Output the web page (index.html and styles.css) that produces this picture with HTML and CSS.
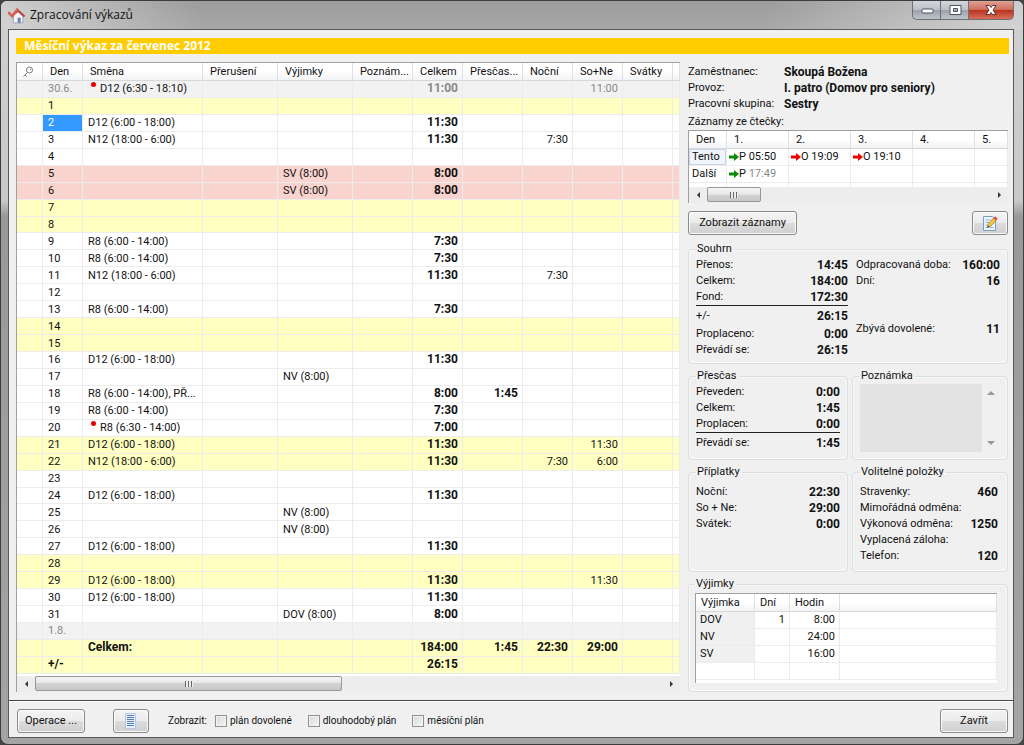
FILE: index.html
```html
<!DOCTYPE html>
<html lang="cs">
<head>
<meta charset="utf-8">
<title>Zpracování výkazů</title>
<link rel="stylesheet" href="styles.css">
</head>
<body>
<div class="window">
  <header class="titlebar">
    <svg class="app-icon" viewBox="0 0 16 16" aria-hidden="true">
      <path d="M5 8v7h9V8l-4.500-4z" fill="#f4f6fa" stroke="#8f9bb0" stroke-width=".8"/>
      <path d="M9 10h3v5H9z" fill="#6f83b8"/>
      <path d="M3 9l6.500-5.500 6 5.500" fill="none" stroke="#b8433c" stroke-width="2"/>
      <path d="M0 5l4 3.500L9.500 1.500" fill="none" stroke="#d8605a" stroke-width="2.500"/>
    </svg>
    <h1 class="title">Zpracování výkazů</h1>
    <div class="controls">
      <button class="control" aria-label="Minimalizovat"><svg viewBox="0 0 16 14"><rect x="3" y="6" width="11" height="4" rx="1" fill="#fff" stroke="#4d5360"/></svg></button>
      <button class="control" aria-label="Maximalizovat"><svg viewBox="0 0 16 14"><path d="M3 2.500h11v9H3zM6.500 5.500h4v3h-4z" fill="#fff" fill-rule="evenodd" stroke="#4d5360"/></svg></button>
      <button class="control control-close" aria-label="Zavřít okno"><svg viewBox="0 0 16 14"><path d="M3 2.500h3.500L8 4.500l1.500-2H13L10 7l3 4.500H9.500L8 9.500l-1.500 2H3L6 7z" fill="#fff" stroke="#5c3030"/></svg></button>
    </div>
  </header>
  <div class="client">
    <h2 class="banner">Měsíční výkaz za červenec 2012</h2>
    <main class="content">
      <section class="sheet">
        <div class="sheet-body">
        <table class="grid month">
          <colgroup><col class="c-key"><col class="c-day"><col class="c-shift"><col class="c-text"><col class="c-text"><col class="c-num60"><col class="c-num50"><col class="c-num60"><col class="c-num50"><col class="c-num50"><col class="c-num50"><col></colgroup>
          <thead><tr><th><svg class="key" viewBox="0 0 12 12" role="img" aria-label="Klíč"><circle cx="7.500" cy="4" r="3" fill="none" stroke="#777"/><path d="M5.500 6.500L1.500 10.500M3 9l1.500 1.500M8 3.500h1" stroke="#777" fill="none"/></svg></th><th>Den</th><th>Směna</th><th>Přerušení</th><th>Výjimky</th><th>Poznám...</th><th>Celkem</th><th>Přesčas...</th><th>Noční</th><th>So+Ne</th><th>Svátky</th><th></th></tr></thead>
          <tbody>
            <tr class="outside"><td><td>30.6.<td><span class="changed">D12 (6:30 - 18:10)</span><td><td><td><td>11:00<td><td><td>11:00<td><td>
            <tr class="weekend"><td><td>1<td><td><td><td><td><td><td><td><td><td>
            <tr><td><td class="selected">2<td>D12 (6:00 - 18:00)<td><td><td><td>11:30<td><td><td><td><td>
            <tr><td><td>3<td>N12 (18:00 - 6:00)<td><td><td><td>11:30<td><td>7:30<td><td><td>
            <tr><td><td>4<td><td><td><td><td><td><td><td><td><td>
            <tr class="holiday"><td><td>5<td><td><td>SV (8:00)<td><td>8:00<td><td><td><td><td>
            <tr class="holiday"><td><td>6<td><td><td>SV (8:00)<td><td>8:00<td><td><td><td><td>
            <tr class="weekend"><td><td>7<td><td><td><td><td><td><td><td><td><td>
            <tr class="weekend"><td><td>8<td><td><td><td><td><td><td><td><td><td>
            <tr><td><td>9<td>R8 (6:00 - 14:00)<td><td><td><td>7:30<td><td><td><td><td>
            <tr><td><td>10<td>R8 (6:00 - 14:00)<td><td><td><td>7:30<td><td><td><td><td>
            <tr><td><td>11<td>N12 (18:00 - 6:00)<td><td><td><td>11:30<td><td>7:30<td><td><td>
            <tr><td><td>12<td><td><td><td><td><td><td><td><td><td>
            <tr><td><td>13<td>R8 (6:00 - 14:00)<td><td><td><td>7:30<td><td><td><td><td>
            <tr class="weekend"><td><td>14<td><td><td><td><td><td><td><td><td><td>
            <tr class="weekend"><td><td>15<td><td><td><td><td><td><td><td><td><td>
            <tr><td><td>16<td>D12 (6:00 - 18:00)<td><td><td><td>11:30<td><td><td><td><td>
            <tr><td><td>17<td><td><td>NV (8:00)<td><td><td><td><td><td><td>
            <tr><td><td>18<td>R8 (6:00 - 14:00), PŘ...<td><td><td><td>8:00<td>1:45<td><td><td><td>
            <tr><td><td>19<td>R8 (6:00 - 14:00)<td><td><td><td>7:30<td><td><td><td><td>
            <tr><td><td>20<td><span class="changed">R8 (6:30 - 14:00)</span><td><td><td><td>7:00<td><td><td><td><td>
            <tr class="weekend"><td><td>21<td>D12 (6:00 - 18:00)<td><td><td><td>11:30<td><td><td>11:30<td><td>
            <tr class="weekend"><td><td>22<td>N12 (18:00 - 6:00)<td><td><td><td>11:30<td><td>7:30<td>6:00<td><td>
            <tr><td><td>23<td><td><td><td><td><td><td><td><td><td>
            <tr><td><td>24<td>D12 (6:00 - 18:00)<td><td><td><td>11:30<td><td><td><td><td>
            <tr><td><td>25<td><td><td>NV (8:00)<td><td><td><td><td><td><td>
            <tr><td><td>26<td><td><td>NV (8:00)<td><td><td><td><td><td><td>
            <tr><td><td>27<td>D12 (6:00 - 18:00)<td><td><td><td>11:30<td><td><td><td><td>
            <tr class="weekend"><td><td>28<td><td><td><td><td><td><td><td><td><td>
            <tr class="weekend"><td><td>29<td>D12 (6:00 - 18:00)<td><td><td><td>11:30<td><td><td>11:30<td><td>
            <tr><td><td>30<td>D12 (6:00 - 18:00)<td><td><td><td>11:30<td><td><td><td><td>
            <tr><td><td>31<td><td><td>DOV (8:00)<td><td>8:00<td><td><td><td><td>
            <tr class="outside"><td><td>1.8.<td><td><td><td><td><td><td><td><td><td>
            <tr class="weekend total"><td><td><td>Celkem:<td><td><td><td>184:00<td>1:45<td>22:30<td>29:00<td><td>
            <tr class="weekend total"><td><td>+/-<td><td><td><td><td>26:15<td><td><td><td><td>
          </tbody>
        </table>
        </div>
        <div class="scroll">
          <button class="arrow left" aria-label="Posunout vlevo"></button>
          <div class="track"><div class="thumb thumb-month"><i></i></div></div>
          <button class="arrow right" aria-label="Posunout vpravo"></button>
        </div>
      </section>

      <aside class="side">
        <dl class="person">
          <dt>Zaměstnanec:</dt><dd>Skoupá Božena</dd>
          <dt>Provoz:</dt><dd>I. patro (Domov pro seniory)</dd>
          <dt>Pracovní skupina:</dt><dd>Sestry</dd>
        </dl>
        <h3 class="caption">Záznamy ze čtečky:</h3>
        <div class="reader">
          <table class="grid">
            <colgroup><col class="r-day"><col class="r-rec"><col class="r-rec"><col class="r-rec"><col class="r-rec"><col></colgroup>
            <thead><tr><th>Den</th><th>1.</th><th>2.</th><th>3.</th><th>4.</th><th>5.</th></tr></thead>
            <tbody>
              <tr><td class="current">Tento<td><span class="rec in">P 05:50</span><td><span class="rec out">O 19:09</span><td><span class="rec out">O 19:10</span><td><td>
              <tr><td>Další<td><span class="rec in">P <span class="dim">17:49</span></span><td><td><td><td>
              <tr class="stub"><td><td><td><td><td><td>
            </tbody>
          </table>
          <div class="scroll">
            <button class="arrow left" aria-label="Posunout vlevo"></button>
            <div class="track"><div class="thumb thumb-reader"><i></i></div></div>
            <button class="arrow right" aria-label="Posunout vpravo"></button>
          </div>
        </div>
        <div class="actions">
          <button class="btn btn-records">Zobrazit záznamy</button>
          <button class="btn btn-icon" aria-label="Upravit">
            <svg viewBox="0 0 16 16"><path d="M1.500 1.500h9l3 3v11h-12z" fill="#eaf4fe" stroke="#7c9cc4"/><path d="M3.500 5h5M3.500 7.500h4M3.500 10h3M3.500 12.500h8" stroke="#8fb4de"/><path d="M6.500 8.500L11.500 3l2.500 2.500L9 11l-3.500 1.200z" fill="#f8c43c" stroke="#a9782a" stroke-width=".7"/><path d="M11.500 3L13 1.200l2.700 2.500L14 5.500z" fill="#dc4b40"/><path d="M5.300 12.400l.7-2 1.400 1.400z" fill="#333"/></svg>
          </button>
        </div>

        <fieldset class="group summary">
          <legend>Souhrn</legend>
          <dl class="pairs">
            <dt>Přenos:</dt><dd>14:45</dd>
            <dt>Celkem:</dt><dd>184:00</dd>
            <dt class="ruled">Fond:</dt><dd class="ruled">172:30</dd>
            <dt class="spaced">+/-</dt><dd class="spaced">26:15</dd>
            <dt>Proplaceno:</dt><dd>0:00</dd>
            <dt>Převádí se:</dt><dd>26:15</dd>
          </dl>
          <div class="summary-right">
            <dl class="pairs"><dt>Odpracovaná doba:</dt><dd>160:00</dd><dt>Dní:</dt><dd>16</dd></dl>
            <dl class="pairs"><dt>Zbývá dovolené:</dt><dd>11</dd></dl>
          </div>
        </fieldset>

        <div class="groups">
          <fieldset class="group overtime">
            <legend>Přesčas</legend>
            <dl class="pairs">
              <dt>Převeden:</dt><dd>0:00</dd>
              <dt>Celkem:</dt><dd>1:45</dd>
              <dt class="ruled">Proplacen:</dt><dd class="ruled">0:00</dd>
              <dt>Převádí se:</dt><dd>1:45</dd>
            </dl>
          </fieldset>
          <fieldset class="group note">
            <legend>Poznámka</legend>
            <div class="note-box">
              <textarea class="note-text" aria-label="Poznámka" disabled></textarea>
              <div class="note-scroll"><i class="up"></i><i class="down"></i></div>
            </div>
          </fieldset>
          <fieldset class="group extras">
            <legend>Příplatky</legend>
            <dl class="pairs">
              <dt>Noční:</dt><dd>22:30</dd>
              <dt>So + Ne:</dt><dd>29:00</dd>
              <dt>Svátek:</dt><dd>0:00</dd>
            </dl>
          </fieldset>
          <fieldset class="group optional">
            <legend>Volitelné položky</legend>
            <dl class="pairs">
              <dt>Stravenky:</dt><dd>460</dd>
              <dt>Mimořádná odměna:</dt><dd></dd>
              <dt>Výkonová odměna:</dt><dd>1250</dd>
              <dt>Vyplacená záloha:</dt><dd></dd>
              <dt>Telefon:</dt><dd>120</dd>
            </dl>
          </fieldset>
        </div>

        <fieldset class="group exceptions">
          <legend>Výjimky</legend>
          <div class="exceptions-box">
          <table class="grid">
            <colgroup><col class="e-name"><col class="e-days"><col class="e-hours"><col></colgroup>
            <thead><tr><th>Výjimka</th><th>Dní</th><th>Hodin</th><th></th></tr></thead>
            <tbody>
              <tr><td class="name">DOV<td>1<td>8:00<td>
              <tr><td class="name">NV<td><td>24:00<td>
              <tr><td class="name">SV<td><td>16:00<td>
              <tr><td><td><td><td>
            </tbody>
          </table>
          </div>
        </fieldset>
      </aside>
    </main>

    <footer class="footer">
      <button class="btn btn-ops">Operace ...</button>
      <button class="btn btn-icon btn-list" aria-label="Seznam">
        <svg viewBox="0 0 16 16"><path d="M2.500.500h10v15h-10z" fill="#e4eefa" stroke="#b4c8e0"/><path d="M4 2.500h7M4 4.500h7M4 6.500h7M4 8.500h7M4 10.500h7M4 12.500h7" stroke="#5682b8"/></svg>
      </button>
      <span class="show">Zobrazit:</span>
      <label class="check"><input type="checkbox">plán dovolené</label>
      <label class="check"><input type="checkbox">dlouhodobý plán</label>
      <label class="check"><input type="checkbox">měsíční plán</label>
      <button class="btn btn-close">Zavřít</button>
    </footer>
  </div>
</div>
</body>
</html>
```
FILE: styles.css
```css
* { box-sizing: border-box; }

body {
  margin: 0;
  background: #444;
  color: #111;
  font: 11px/16px Roboto, "Liberation Sans", sans-serif;
}

h1, h2, h3, dl, dd { margin: 0; font-weight: 400; }
button, textarea, input { font: inherit; color: inherit; margin: 0; }

.window {
  display: flex;
  flex-direction: column;
  height: 100vh;
  padding: 0 9px 6px 7px;
  border: 1px solid #3c3c3c;
  border-radius: 7px 7px 8px 8px;
  background: linear-gradient(#d0d0d0, #c8c8c8 200px, #999 215px, #a4a4a4);
}

.titlebar {
  display: flex;
  align-items: center;
  height: 28px;
  margin: 0 -9px 0 -7px;
  padding: 0 9px 0 7px;
  border-radius: 6px 6px 0 0;
  background: linear-gradient(90deg, rgba(255, 255, 255, .5), rgba(255, 255, 255, 0) 200px 75%, rgba(255, 255, 255, .5)), linear-gradient(#9c9c9c, #a8a8a8);
}

.app-icon { width: 17px; height: 17px; }
.title { margin-left: 5px; font: 12px/16px "Open Sans", "Noto Sans", sans-serif; }

.controls { display: flex; align-self: flex-start; margin-left: auto; height: 19px; }
.control {
  display: flex;
  align-items: center;
  justify-content: center;
  width: 28px;
  padding: 0;
  border: 1px solid #6b6f78;
  border-top: 0;
  border-right: 0;
  background: linear-gradient(#d4d6da, #bcbfc6 50%, #9ca0aa 50%, #bfc3ca);
}
.control:first-child { border-radius: 0 0 0 5px; }
.control svg { width: 16px; height: 14px; }
.control-close {
  width: 46px;
  border-right: 1px solid #6b6f78;
  border-radius: 0 0 5px 0;
  background: linear-gradient(#e0a296, #cf6a5a 50%, #b8301c 50%, #d8705a);
}

.client {
  display: flex;
  flex: 1;
  flex-direction: column;
  min-height: 0;
  border: 1px solid #5a5a5a;
  background: #f0f0f0;
}

.banner {
  margin: 8px 4px 0 7px;
  padding-left: 8px;
  background: #fc0;
  color: #fff;
  font: bold 12px/16px "Open Sans", "Noto Sans", sans-serif;
}

.content { display: flex; flex: 1; gap: 8px; min-height: 0; padding: 8px 5px 8px 7px; }
.sheet { display: flex; flex: 1; flex-direction: column; min-width: 0; border: 1px solid #a0a0a0; border-width: 1px 0 0 1px; background: #fff; }
.sheet-body { flex: 1; min-height: 0; padding-bottom: 2px; }
.side { width: 320px; }

.grid { width: 100%; border-collapse: separate; border-spacing: 0; table-layout: fixed; }
.grid th {
  height: 18px;
  padding: 0 0 0 7px;
  border-right: 1px solid #e0e0e4;
  border-bottom: 1px solid #d8d8d8;
  background: linear-gradient(#fff 50%, #f2f3f5);
  font-weight: 400;
  text-align: left;
  line-height: 16px;
  white-space: nowrap;
}
.grid td {
  height: 17px;
  padding: 0 4px;
  border-right: 1px solid #ececec;
  border-bottom: 1px solid #ececec;
  line-height: 16px;
  white-space: nowrap;
}
.key { display: block; width: 12px; height: 12px; margin-left: -2px; }

.month { height: 100%; }
.month td { height: 16px; padding-left: 5px; line-height: 15px; }
.c-key { width: 26px; }
.c-day { width: 40px; }
.c-shift { width: 120px; }
.c-text { width: 75px; }
.c-num60 { width: 60px; }
.c-num50 { width: 50px; }
.month td:nth-child(n+7) { text-align: right; }
.month td:nth-child(7), .month td:nth-child(8), .month .total td { font-weight: 700; font-size: 12px; }
.month .outside td { background: #f2f2f2; color: #888; }
.weekend td { background: #ffffc1; }
.holiday td { background: #f9d3cd; }
.grid .selected { background: #3399ff; color: #fff; }
.changed { color: #111; }
.changed::before {
  content: "";
  display: inline-block;
  width: 5px;
  height: 5px;
  margin: 0 4px 0 3px;
  border-radius: 50%;
  background: #e80000;
  vertical-align: 5px;
}

.scroll { display: flex; height: 16px; background: #ededed; }
.arrow { width: 18px; padding: 0; border: 0; background: none; display: flex; align-items: center; justify-content: center; }
.arrow::before { content: ""; border: 3px solid transparent; }
.arrow.left::before { border-right-color: #333; border-left: 0; }
.arrow.right::before { border-left-color: #333; border-right: 0; }
.track { flex: 1; }
.thumb {
  display: flex;
  align-items: center;
  justify-content: center;
  height: 15px;
  border: 1px solid #979797;
  border-radius: 2px;
  background: linear-gradient(#f5f5f5, #e6e6e6 50%, #d2d2d2 50%, #c8c8c8);
}
.thumb i { width: 8px; height: 6px; background: repeating-linear-gradient(90deg, #666 0 1px, #eee 1px 3px); }
.thumb-month { width: 49%; }
.thumb-reader { width: 54px; }

.person { display: grid; grid-template-columns: 96px 1fr; padding-top: 2px; }
dd { font-size: 12px; font-weight: 700; }
.caption { padding-top: 2px; font-size: 11px; }
.reader { border: 1px solid #a0a0a0; border-width: 1px 0 0 1px; background: #fff; }
.r-day { width: 38px; }
.r-rec { width: 62px; }
.reader .current { background: #f0f4fb; box-shadow: inset 0 0 0 1px #c8d4ea; }
.grid .stub td { height: 4px; border-bottom: 0; }
.reader td { padding: 0 2px; }
.reader td:first-child { padding-left: 3px; }
.rec { display: flex; align-items: center; white-space: pre; }
.rec::before { content: ""; width: 10px; height: 8px; background: currentColor; clip-path: polygon(0 30%, 50% 30%, 50% 0, 100% 50%, 50% 100%, 50% 70%, 0 70%); }
.in::before { background: #0a8a0a; }
.out::before { background: #f00000; }
.dim { color: #888; }

.actions { display: flex; justify-content: space-between; padding: 8px 0 6px; }
.btn {
  height: 24px;
  padding: 0 6px;
  border: 1px solid #8a8a8a;
  border-radius: 3px;
  background: linear-gradient(#f4f4f4, #ebebeb 50%, #dcdcdc 50%, #d0d0d0);
  box-shadow: inset 0 0 0 1px #fafafa;
  white-space: nowrap;
}
.btn-records { width: 109px; }
.btn-icon { display: flex; align-items: center; justify-content: center; width: 36px; padding: 0; }
.btn-icon svg { width: 16px; height: 16px; }

.group { min-width: 0; margin: 0; padding: 0 7px; border: 1px solid #dcdfe2; border-radius: 3px; box-shadow: inset 0 0 0 1px #f8f8f8; }
.group legend { padding: 0 2px 0 1px; line-height: 16px; }
.pairs { display: grid; grid-template-columns: auto 1fr; align-content: start; }
.pairs dt { white-space: nowrap; }
.pairs dd { min-height: 16px; text-align: right; }
.ruled { margin-bottom: 2px; border-bottom: 1px solid #222; }
.spaced { margin-bottom: 2px; }

.summary { display: grid; grid-template-columns: 152px 1fr; gap: 8px; height: 123px; }
.summary-right { display: flex; flex-direction: column; gap: 32px; }
.groups { display: grid; grid-template-columns: 160px 1fr; gap: 4px; padding-top: 4px; }
.overtime, .note { height: 92px; }
.extras, .optional { height: 108px; }
.extras .pairs, .optional .pairs { padding-top: 4px; }
.note-box { display: flex; height: 68px; }
.note-text { flex: 1; min-width: 0; border: 0; background: #e3e3e3; resize: none; }
.note-scroll { display: flex; flex-direction: column; justify-content: space-between; align-items: center; width: 18px; padding: 7px 0; }
.up, .down { border: 4px solid transparent; }
.up { border-bottom-color: #999; border-top: 0; }
.down { border-top-color: #999; border-bottom: 0; }
.optional { padding-right: 9px; }
.exceptions { margin-top: 4px; padding-left: 6px; }
.exceptions-box { height: 90px; margin: 1px 3px 8px 0; overflow: hidden; border: 1px solid #a0a0a0; border-width: 1px 0 0 1px; background: #fff; }
.exceptions th { padding-left: 5px; }
.e-name { width: 59px; }
.e-days { width: 35px; }
.e-hours { width: 50px; }
.exceptions td:nth-child(n+2) { text-align: right; }
.exceptions .name { background: #f0f0f0; }

.footer { display: flex; align-items: center; height: 37px; padding: 4px 5px 0 8px; border-top: 1px solid #444; box-shadow: inset 0 1px #fff; font-size: 10px; }
.footer .btn { font-size: 11px; }
.btn-ops { width: 68px; }
.footer .btn-list { margin-left: 28px; }
.show { margin: 0 8px 0 19px; }
.check { display: flex; align-items: center; margin-right: 16px; }
.check input { appearance: none; width: 12px; height: 12px; margin-right: 3px; border: 1px solid #8e8f8f; background: linear-gradient(135deg, #d5d7da, #f6f6f6); box-shadow: inset 0 0 0 1px #f4f4f4; }
.btn-close { width: 68px; margin-left: auto; }
```
